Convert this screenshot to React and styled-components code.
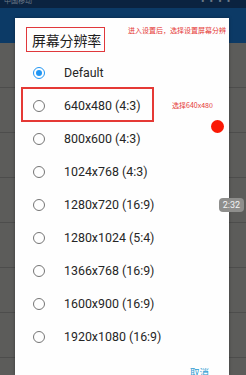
import React from "react";
import styled, { createGlobalStyle } from "styled-components";

const Global = createGlobalStyle`
  html, body { margin: 0; padding: 0; background: #5c5c5a; }
  body { font-family: Roboto, "Noto Sans", "Noto Sans CJK SC", sans-serif; overflow: hidden; }
`;

const Screen = styled.div`
  position: relative;
  width: 246px;
  height: 375px;
  overflow: hidden;
  background: #5c5c5a;
`;

const StatusBar = styled.div`
  height: 8px;
  background: #0b2340;
  display: flex;
  align-items: flex-end;
  justify-content: space-between;
  padding: 0 14px 0 4px;
  overflow: hidden;
`;

const StatusText = styled.span`
  font-size: 7px;
  line-height: 7px;
  color: #6d7a88;
  margin-bottom: 4px;
  font-family: "Noto Sans CJK SC", sans-serif;
`;

const AppBar = styled.div`
  height: 35px;
  background: #0c3a66;
`;

const BgRow = styled.div`
  height: 44px;
  border-bottom: 1px solid #4d4d4c;
`;

const Dialog = styled.div`
  position: absolute;
  left: 15px;
  top: 18px;
  width: 214px;
  bottom: 0;
  background: #fefefe;
  box-shadow: 0 0 3px rgba(0, 0, 0, 0.35);
`;

const TitleBox = styled.div`
  margin: 9px 0 0 11px;
  width: 79px;
  height: 25px;
  box-sizing: border-box;
  border: 1.5px solid #e0383c;
  display: flex;
  align-items: center;
  padding-left: 5px;
  font-family: "Noto Sans CJK SC", sans-serif;
  font-size: 14px;
  color: #1e1e1e;
  letter-spacing: -0.2px;
`;

const Options = styled.div`
  margin-top: 4px;
  display: flex;
  flex-direction: column;
`;

const Option = styled.div`
  position: relative;
  height: 33px;
  display: flex;
  align-items: center;
  padding-left: 18px;
`;

const Radio = styled.span`
  width: 12px;
  height: 12px;
  box-sizing: border-box;
  border-radius: 50%;
  border: 1.5px solid ${(p) => (p.$checked ? "#2196f3" : "#757575")};
  display: flex;
  align-items: center;
  justify-content: center;
  &::after {
    content: "";
    width: 6px;
    height: 6px;
    border-radius: 50%;
    background: #2196f3;
    display: ${(p) => (p.$checked ? "block" : "none")};
  }
`;

const Label = styled.span`
  margin-left: 19px;
  font-size: 12.4px;
  color: #262626;
`;

const Highlight = styled.div`
  position: absolute;
  z-index: 1;
  left: 6px;
  top: -2px;
  width: 133px;
  height: 35px;
  box-sizing: border-box;
  border: 2px solid #e53935;
  pointer-events: none;
`;

const Note = styled.span`
  position: absolute;
  left: ${(p) => p.$left}px;
  top: ${(p) => p.$top}px;
  font-family: "Noto Sans CJK SC", sans-serif;
  font-size: 7px;
  line-height: 8px;
  color: #e53935;
  white-space: nowrap;
`;

const Footer = styled.div`
  display: flex;
  justify-content: flex-end;
  padding: 13px 20px 0 0;
`;

const Cancel = styled.span`
  font-family: "Noto Sans CJK SC", sans-serif;
  font-size: 9.5px;
  line-height: 12px;
  color: #2a9bd1;
`;

const Dot = styled.div`
  position: absolute;
  left: 211px;
  top: 120px;
  width: 13px;
  height: 13px;
  border-radius: 50%;
  background: #fa1905;
`;

const Badge = styled.div`
  position: absolute;
  left: 219px;
  top: 198px;
  width: 25px;
  height: 14px;
  border-radius: 4px;
  background: #8e8e8c;
  color: #f4f4f4;
  font-size: 9px;
  display: flex;
  align-items: center;
  justify-content: center;
`;

const items = [
  "Default",
  "640x480 (4:3)",
  "800x600 (4:3)",
  "1024x768 (4:3)",
  "1280x720 (16:9)",
  "1280x1024 (5:4)",
  "1366x768 (16:9)",
  "1600x900 (16:9)",
  "1920x1080 (16:9)",
];

export default function App() {
  return (
    <Screen>
      <Global />
      <StatusBar>
        <StatusText>中国移动</StatusText>
        <StatusText>▪ ▪ ▪ ▪</StatusText>
      </StatusBar>
      <AppBar />
      {Array.from({ length: 8 }).map((_, i) => (
        <BgRow key={i} />
      ))}
      <Dialog>
        <TitleBox>屏幕分辨率</TitleBox>
        <Note $left={113} $top={8}>进入设置后，选择设置屏幕分辨</Note>
        <Options>
          {items.map((t, i) => (
            <Option key={t}>
              <Radio $checked={i === 0} />
              <Label>{t}</Label>
              {i === 1 && <Highlight />}
              {i === 1 && <Note $left={157} $top={12}>选择640x480</Note>}
            </Option>
          ))}
        </Options>
        <Footer>
          <Cancel>取消</Cancel>
        </Footer>
      </Dialog>
      <Dot />
      <Badge>2:32</Badge>
    </Screen>
  );
}
